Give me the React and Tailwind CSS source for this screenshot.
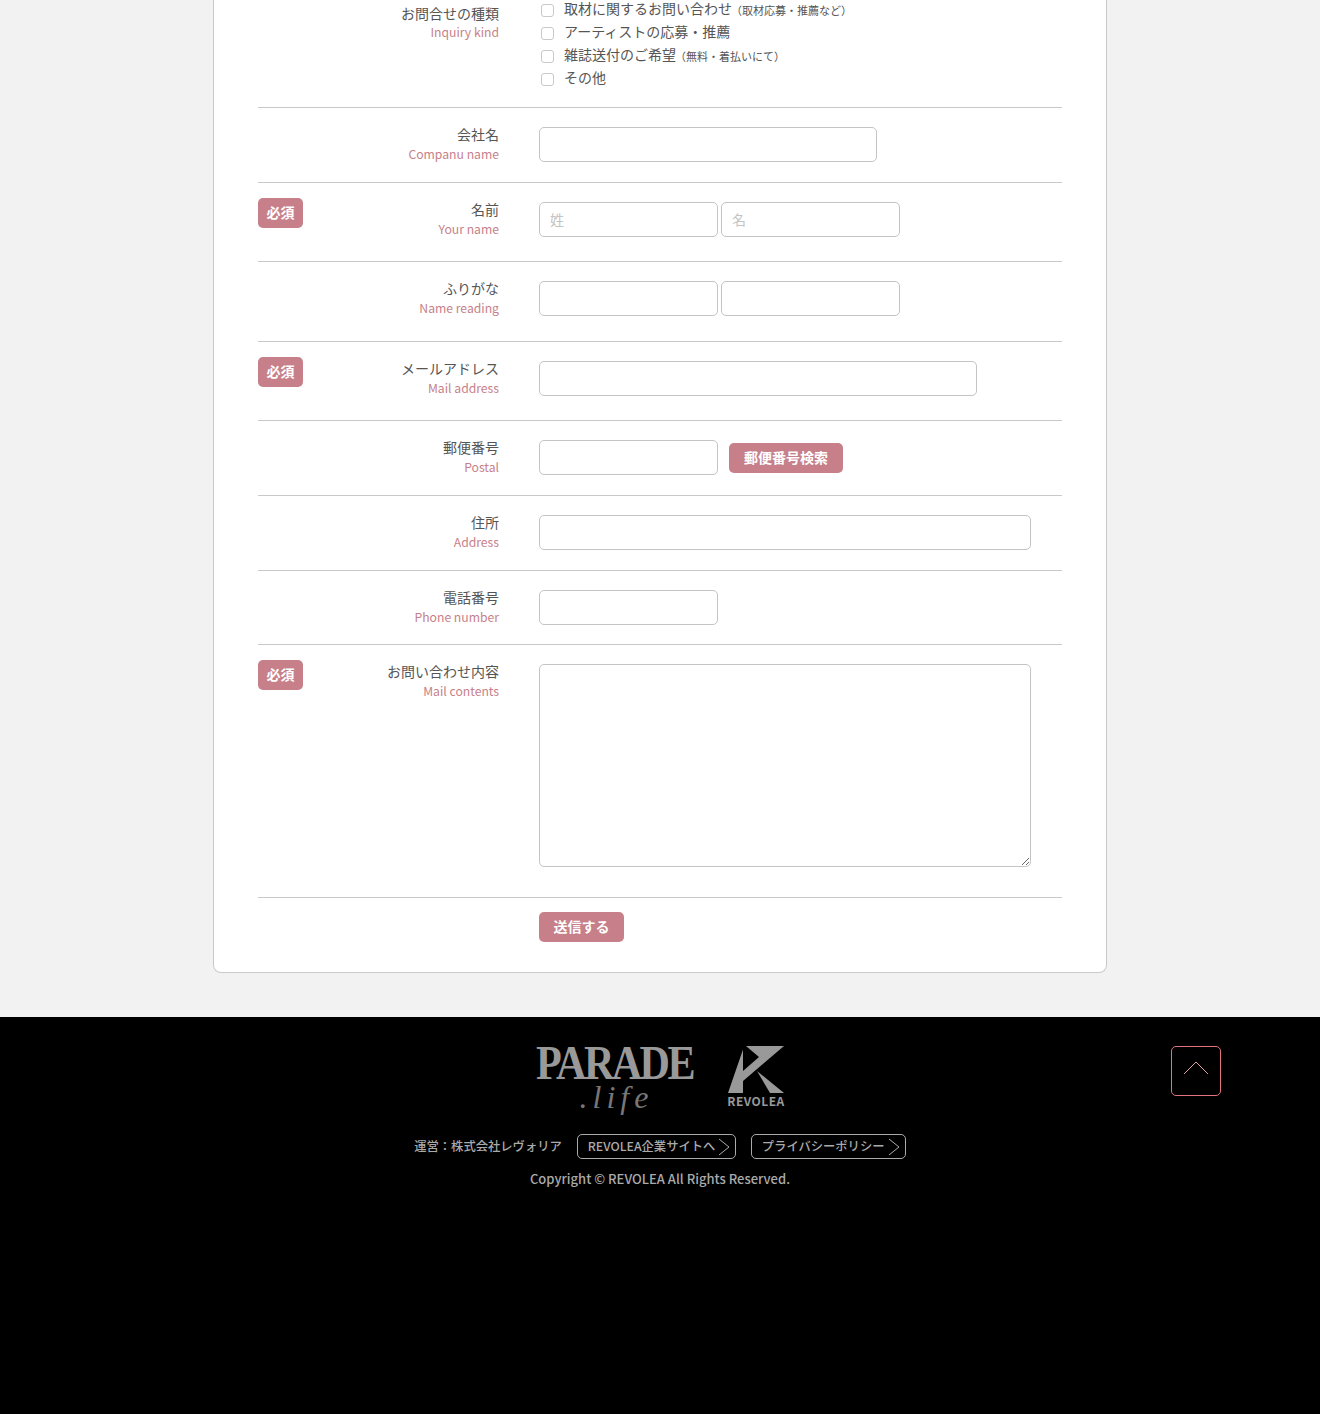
import React from 'react';

const inputClass = 'h-[35px] rounded-[5px] border border-[#c4c4c4] bg-white px-2.5 pb-0.5 text-sm outline-none placeholder:text-[#c4c4c4]';

const Badge = () => (
  <span className="-mt-1 flex h-[30px] w-[45px] items-center justify-center rounded-[5px] bg-[#c77f89] pb-0.5 text-sm font-bold text-white">
    必須
  </span>
);

const Row = ({ label, sub, required, className, children }) => (
  <div className={`flex border-b border-[#c9c9c9] pt-[19px] ${className}`}>
    <div className="flex h-[35px] w-[241px] shrink-0 justify-between">
      <div>{required && <Badge />}</div>
      <div className="-mt-0.5 text-right">
        <div className="h-[19px] text-sm leading-[19px] text-[#555]">{label}</div>
        <div className="mt-px text-[12.2px] leading-[19px] text-[#c77f89]">{sub}</div>
      </div>
    </div>
    <div className="ml-10 flex items-start">{children}</div>
  </div>
);

const Check = ({ text, note }) => (
  <label className="flex h-[23px] items-center">
    <input type="checkbox" className="ml-0.5 h-[13px] w-[13px] appearance-none rounded-[3px] border border-[#c9c9c9] bg-white" />
    <span className="-mt-[5px] ml-[10px] text-sm text-[#555]">{text}</span>
    {note && <span className="-mt-px -ml-px text-[11px] text-[#555]">{note}</span>}
  </label>
);

const Chevron = () => (
  <svg width="12" height="18" viewBox="0 0 12 18" fill="none" stroke="#aaa" strokeWidth="1" className="shrink-0">
    <path d="M1 1 L11 9 L1 17" />
  </svg>
);

const App = () => {
  return (
    <div className="min-h-[1414px] bg-[#f2f2f2] [font-family:'Noto_Sans_CJK_JP',sans-serif]">
      <div className="mx-auto w-[894px] rounded-b-lg border-x border-b border-[#c9c9c9] bg-white px-[44px] pb-[30px]">
        <div className="flex border-b border-[#c9c9c9] pb-4">
          <div className="w-[241px] shrink-0 pt-1 text-right">
            <div className="h-[19px] text-sm leading-[19px] text-[#555]">お問合せの種類</div>
            <div className="text-[12.2px] leading-[19px] text-[#c77f89]">Inquiry kind</div>
          </div>
          <div className="-mt-px ml-10 flex flex-col">
            <Check text="取材に関するお問い合わせ" note="（取材応募・推薦など）" />
            <Check text="アーティストの応募・推薦" />
            <Check text="雑誌送付のご希望" note="（無料・着払いにて）" />
            <Check text="その他" />
          </div>
        </div>

        <Row label="会社名" sub="Companu name" className="pb-5">
          <input className={`${inputClass} w-[338px]`} />
        </Row>
        <Row label="名前" sub="Your name" required className="pb-6">
          <div className="flex gap-[3px]">
            <input className={`${inputClass} w-[179px]`} placeholder="姓" />
            <input className={`${inputClass} w-[179px]`} placeholder="名" />
          </div>
        </Row>
        <Row label="ふりがな" sub="Name reading" className="pb-[25px]">
          <div className="flex gap-[3px]">
            <input className={`${inputClass} w-[179px]`} />
            <input className={`${inputClass} w-[179px]`} />
          </div>
        </Row>
        <Row label="メールアドレス" sub="Mail address" required className="pb-6">
          <input className={`${inputClass} w-[438px]`} />
        </Row>
        <Row label="郵便番号" sub="Postal" className="pb-5">
          <input className={`${inputClass} w-[179px]`} />
          <button className="ml-[11px] mt-[3px] h-[30px] w-[114px] rounded-[5px] bg-[#c77f89] pb-0.5 text-sm font-bold text-white">
            郵便番号検索
          </button>
        </Row>
        <Row label="住所" sub="Address" className="pb-5">
          <input className={`${inputClass} w-[492px]`} />
        </Row>
        <Row label="電話番号" sub="Phone number" className="pb-[19px]">
          <input className={`${inputClass} w-[179px]`} />
        </Row>
        <Row label="お問い合わせ内容" sub="Mail contents" required className="pb-[30px]">
          <textarea className="block h-[203px] w-[492px] rounded-[5px] border border-[#c4c4c4] bg-white outline-none" />
        </Row>

        <div className="ml-[281px] mt-[14px]">
          <button className="h-[30px] w-[85px] rounded-[5px] bg-[#c77f89] pb-0.5 text-sm font-bold text-white">送信する</button>
        </div>
      </div>

      <footer className="relative mt-[44px] h-[397px] bg-black pt-[29px]">
        <div className="flex justify-center">
          <div className="flex items-start gap-[34px]">
            <div className="relative h-[66px] w-[158px]">
              <div className="origin-left scale-x-[0.86] whitespace-nowrap text-[49px] font-bold leading-[34px] tracking-[-3px] text-[#999] [font-family:'Liberation_Serif',serif]">
                PARADE
              </div>
              <div className="absolute left-[44px] top-[36px] text-[32px] italic leading-[30px] tracking-[5px] text-[#777] [font-family:'Liberation_Serif',serif]">
                .life
              </div>
            </div>
            <div className="flex w-[57px] flex-col items-center">
              <svg width="56" height="47" viewBox="6 6 56 47" fill="#999">
                <path d="M24 6 H62 L21 41 V53 H6 L21 9.5 V31 L37 17 Z" />
                <path d="M35 31 L62 53 H48 Z" />
              </svg>
              <div className="whitespace-nowrap text-xs font-bold leading-[15px] tracking-[0.5px] text-[#999]">REVOLEA</div>
            </div>
          </div>
        </div>

        <div className="mt-[22px] flex justify-center text-[12.3px] font-medium text-[#aaa]">
          <div className="flex items-center whitespace-nowrap">
            <span>運営：株式会社レヴォリア</span>
            <a className="ml-[15px] flex h-[25px] w-[159px] items-center justify-between rounded-[5px] border border-[#aaa] pl-[10px] pr-[5px]">
              REVOLEA企業サイトへ
              <Chevron />
            </a>
            <a className="ml-[15px] flex h-[25px] w-[155px] items-center justify-between rounded-[5px] border border-[#aaa] pl-[10px] pr-[5px]">
              プライバシーポリシー
              <Chevron />
            </a>
          </div>
        </div>
        <div className="mt-[10px] text-center text-[13px] font-medium text-[#aaa]">Copyright © REVOLEA All Rights Reserved.</div>

        <a className="absolute left-[1171px] top-[29px] flex h-[50px] w-[50px] items-center justify-center rounded-[5px] border border-[#e2747e]">
          <svg width="26" height="14" viewBox="0 0 26 14" fill="none" stroke="#e0a0a6" strokeWidth="1" className="-mt-1.5">
            <path d="M1 13 L13 1 L25 13" />
          </svg>
        </a>
      </footer>
    </div>
  );
};

export default App;
